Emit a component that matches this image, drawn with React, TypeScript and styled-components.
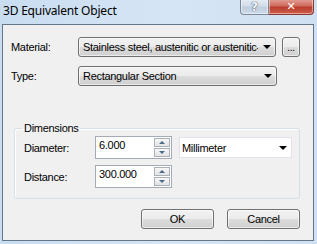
import styled, { createGlobalStyle } from "styled-components";

const GlobalStyle = createGlobalStyle`
  html, body {
    margin: 0;
    padding: 0;
    background: #ffffff;
  }
  * {
    box-sizing: border-box;
  }
`;

/* Win7 style dialog frame */
const Window = styled.div`
  width: 317px;
  height: 244px;
  display: flex;
  flex-direction: column;
  padding: 0 3px 3px 2px;
  background: linear-gradient(to right, #c9ddf1 0%, #d6e5f5 55%, #cfe0f2 100%);
  font-family: "Liberation Sans", Arial, sans-serif;
  font-size: 11px;
  letter-spacing: -0.3px;
  color: #000;
`;

const TitleBar = styled.div`
  height: 24px;
  display: flex;
  align-items: flex-start;
  justify-content: space-between;
`;

const Title = styled.div`
  padding: 2px 0 0 1px;
  font-family: "Noto Sans", "Liberation Sans", sans-serif;
  font-size: 12px;
  letter-spacing: -0.2px;
  color: #000;
`;

const Caption = styled.div`
  display: flex;
  margin-top: -1px;
`;

const CaptionBtn = styled.div<{ $close?: boolean }>`
  width: ${(p) => (p.$close ? "45px" : "29px")};
  height: 16px;
  display: flex;
  align-items: center;
  justify-content: center;
  border: 1px solid ${(p) => (p.$close ? "#8a3a32" : "#7c8797")};
  border-top: none;
  border-radius: ${(p) => (p.$close ? "0 0 4px 0" : "0 0 0 4px")};
  border-left: ${(p) => (p.$close ? "none" : undefined)};
  background: ${(p) =>
    p.$close
      ? "linear-gradient(to bottom, #e3a095 0%, #cf6c5e 45%, #b93d2f 55%, #cf5f4a 100%)"
      : "linear-gradient(to bottom, #e6edf5 0%, #d2dde9 45%, #bfcede 55%, #cfdbea 100%)"};
  box-shadow: inset 0 0 0 1px rgba(255, 255, 255, 0.45);
  color: #fff;
  font-family: "DejaVu Sans", sans-serif;
  font-weight: bold;
  font-size: 11px;
  letter-spacing: 0;
  line-height: 1;
`;

const HelpMark = styled.span`
  color: #f4f7fb;
  font-size: 12px;
  text-shadow: 0 0 1px #3c4a5c, 0 0 1px #3c4a5c;
`;

const Client = styled.div`
  flex: 1;
  display: flex;
  flex-direction: column;
  background: #f0f0f0;
  border: 1px solid #66768a;
  padding: 12px 13px 0 8px;
`;

const Row = styled.div<{ $gap?: number }>`
  display: flex;
  align-items: center;
  margin-bottom: ${(p) => p.$gap ?? 0}px;
`;

const Label = styled.div<{ $w: number }>`
  width: ${(p) => p.$w}px;
  flex-shrink: 0;
  white-space: nowrap;
`;

const Combo = styled.div<{ $w: number }>`
  width: ${(p) => p.$w}px;
  height: 20px;
  display: flex;
  align-items: center;
  padding: 0 0 0 4px;
  border: 1px solid #707070;
  border-radius: 3px;
  background: linear-gradient(to bottom, #f2f2f2 0%, #ebebeb 50%, #dddddd 50%, #cfcfcf 100%);
  box-shadow: inset 0 0 0 1px rgba(255, 255, 255, 0.6);
  overflow: hidden;
`;

const ComboText = styled.span`
  flex: 1;
  min-width: 0;
  white-space: nowrap;
  overflow: hidden;
`;

const Arrow = styled.span`
  width: 17px;
  flex-shrink: 0;
  display: flex;
  justify-content: center;
  &::before {
    content: "";
    border-left: 4px solid transparent;
    border-right: 4px solid transparent;
    border-top: 4px solid #000;
  }
`;

const DotsBtn = styled.div`
  width: 18px;
  height: 20px;
  margin-left: 6px;
  border: 1px solid #707070;
  border-radius: 3px;
  background: linear-gradient(to bottom, #f2f2f2 0%, #ebebeb 50%, #dddddd 50%, #cfcfcf 100%);
  box-shadow: inset 0 0 0 1px rgba(255, 255, 255, 0.6);
  display: flex;
  align-items: center;
  justify-content: center;
  font-size: 10px;
  padding-top: 1px;
`;

const Group = styled.fieldset`
  margin: 36px 0 0 3px;
  padding: 2px 0 0 9px;
  height: 77px;
  border: 1px solid #d5dfe5;
  border-radius: 3px;
  box-shadow: inset 1px 1px 0 #ffffff;
`;

const Legend = styled.legend`
  padding: 0 2px;
  margin-left: -2px;
  line-height: 12px;
`;

const Spin = styled.div`
  display: flex;
  width: 77px;
  height: 23px;
  border: 1px solid #a5acb5;
  background: #fff;
  padding: 1px;
`;

const SpinInput = styled.div`
  flex: 1;
  padding: 1px 0 0 2px;
`;

const SpinButtons = styled.div`
  width: 16px;
  display: flex;
  flex-direction: column;
  gap: 1px;
`;

const SpinBtn = styled.div<{ $up?: boolean }>`
  flex: 1;
  border: 1px solid #a9b1ba;
  background: linear-gradient(to bottom, #f7f7f7, #e3e3e3);
  display: flex;
  align-items: center;
  justify-content: center;
  &::before {
    content: "";
    border-left: 3px solid transparent;
    border-right: 3px solid transparent;
    ${(p) =>
      p.$up ? "border-bottom: 3px solid #4a6a8c;" : "border-top: 3px solid #4a6a8c;"}
  }
`;

const ListCombo = styled.div`
  width: 113px;
  height: 21px;
  margin-left: 7px;
  display: flex;
  align-items: center;
  padding-left: 2px;
  border: 1px solid #e2e3ea;
  background: #fff;
`;

const Footer = styled.div`
  display: flex;
  justify-content: flex-end;
  gap: 13px;
  margin-top: 10px;
`;

const Button = styled.div`
  width: 73px;
  height: 20px;
  display: flex;
  align-items: center;
  justify-content: center;
  border: 1px solid #707070;
  border-radius: 3px;
  background: linear-gradient(to bottom, #f2f2f2 0%, #ebebeb 50%, #dddddd 50%, #cfcfcf 100%);
  box-shadow: inset 0 0 0 1px rgba(255, 255, 255, 0.6);
`;

function SpinBox({ value }: { value: string }) {
  return (
    <Spin>
      <SpinInput>{value}</SpinInput>
      <SpinButtons>
        <SpinBtn $up />
        <SpinBtn />
      </SpinButtons>
    </Spin>
  );
}

export default function App() {
  return (
    <>
      <GlobalStyle />
      <Window>
        <TitleBar>
          <Title>3D Equivalent Object</Title>
          <Caption>
            <CaptionBtn>
              <HelpMark>?</HelpMark>
            </CaptionBtn>
            <CaptionBtn $close>✕</CaptionBtn>
          </Caption>
        </TitleBar>
        <Client>
          <Row $gap={9}>
            <Label $w={67}>Material:</Label>
            <Combo $w={199}>
              <ComboText>Stainless steel, austenitic or austenitic-ferritic</ComboText>
              <Arrow />
            </Combo>
            <DotsBtn>...</DotsBtn>
          </Row>
          <Row>
            <Label $w={67}>Type:</Label>
            <Combo $w={199}>
              <ComboText>Rectangular Section</ComboText>
              <Arrow />
            </Combo>
          </Row>
          <Group>
            <Legend>Dimensions</Legend>
            <Row $gap={6}>
              <Label $w={71}>Diameter:</Label>
              <SpinBox value="6.000" />
              <ListCombo>
                <ComboText>Millimeter</ComboText>
                <Arrow />
              </ListCombo>
            </Row>
            <Row>
              <Label $w={71}>Distance:</Label>
              <SpinBox value="300.000" />
            </Row>
          </Group>
          <Footer>
            <Button>OK</Button>
            <Button>Cancel</Button>
          </Footer>
        </Client>
      </Window>
    </>
  );
}
